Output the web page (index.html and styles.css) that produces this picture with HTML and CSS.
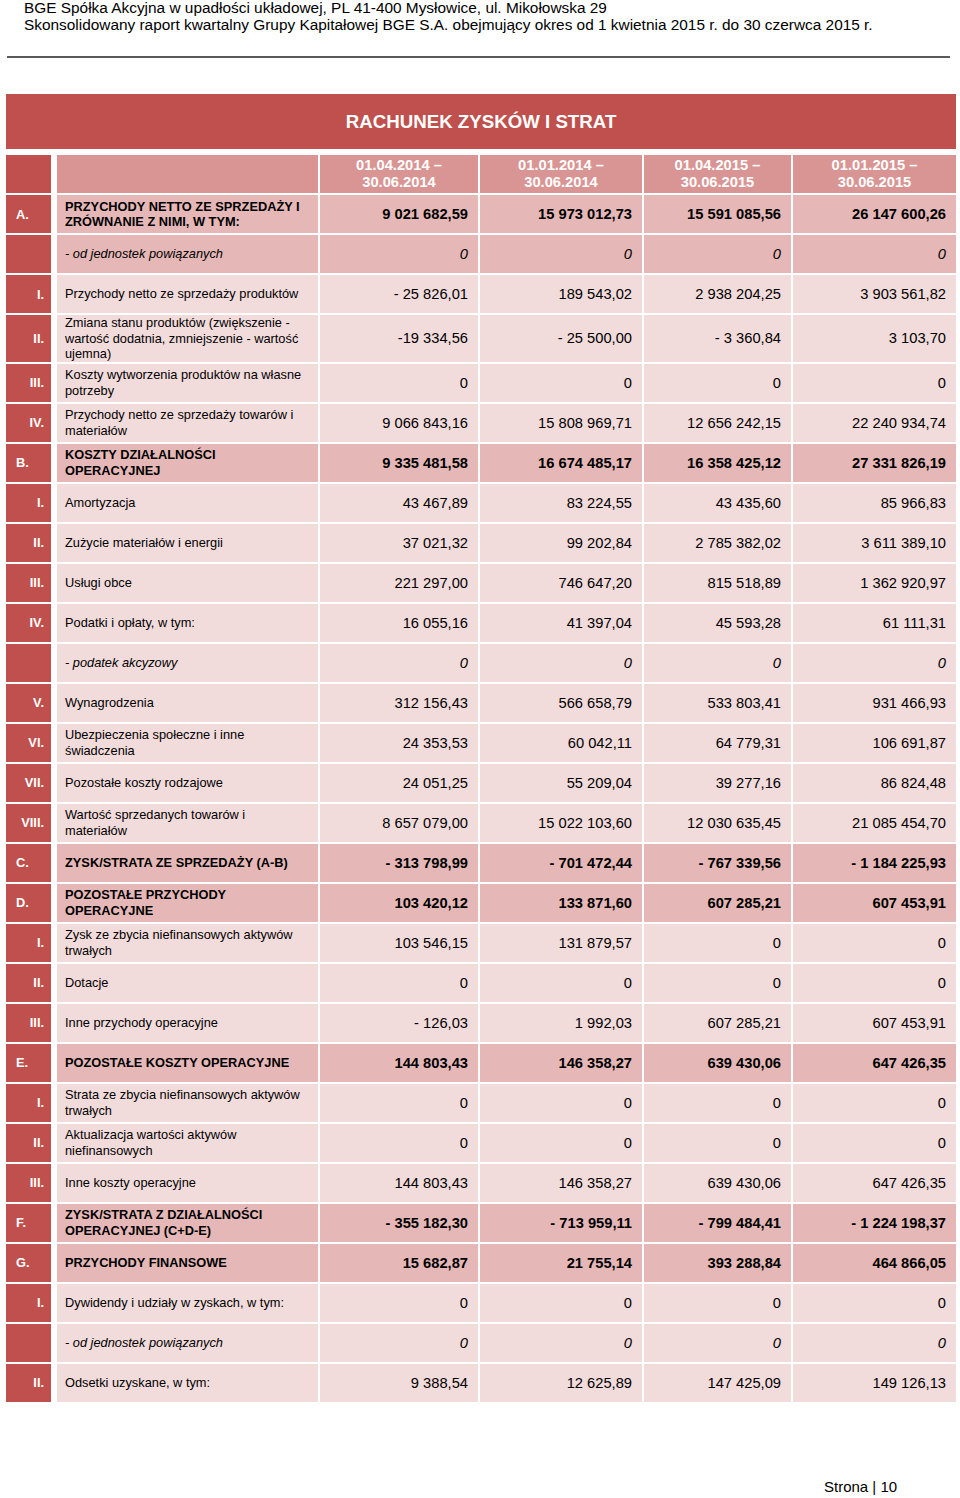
FILE: index.html
```html
<!DOCTYPE html>
<html lang="pl">
<head>
<meta charset="utf-8">
<title>Rachunek zysków i strat</title>
<link rel="stylesheet" href="styles.css">
</head>
<body>
<header class="doc-head">
  <p>BGE Spółka Akcyjna w upadłości układowej, PL 41-400 Mysłowice, ul. Mikołowska 29</p>
  <p>Skonsolidowany raport kwartalny Grupy Kapitałowej BGE S.A. obejmujący okres od 1 kwietnia 2015 r. do 30 czerwca 2015 r.</p>
</header>
<hr class="rule">
<section class="report">
  <h1 class="title">RACHUNEK ZYSKÓW I STRAT</h1>
  <table class="pl">
    <colgroup>
      <col class="c0"><col class="c1"><col class="c2"><col class="c3"><col class="c4"><col class="c5">
    </colgroup>
    <thead>
      <tr class="head">
        <th class="idx"></th>
        <th class="hlabel"></th>
        <th>01.04.2014 –<br>30.06.2014</th>
        <th>01.01.2014 –<br>30.06.2014</th>
        <th>01.04.2015 –<br>30.06.2015</th>
        <th>01.01.2015 –<br>30.06.2015</th>
      </tr>
    </thead>
    <tbody>
      <tr class="mid strong">
        <td class="idx letter">A.</td>
        <td class="label">PRZYCHODY NETTO ZE SPRZEDAŻY I<br>ZRÓWNANIE Z NIMI, W TYM:</td>
        <td class="num">9 021 682,59</td><td class="num">15 973 012,73</td><td class="num">15 591 085,56</td><td class="num">26 147 600,26</td>
      </tr>
      <tr class="mid sub">
        <td class="idx"></td>
        <td class="label">- od jednostek powiązanych</td>
        <td class="num">0</td><td class="num">0</td><td class="num">0</td><td class="num">0</td>
      </tr>
      <tr class="light">
        <td class="idx roman">I.</td>
        <td class="label">Przychody netto ze sprzedaży produktów</td>
        <td class="num">- 25 826,01</td><td class="num">189 543,02</td><td class="num">2 938 204,25</td><td class="num">3 903 561,82</td>
      </tr>
      <tr class="light">
        <td class="idx roman">II.</td>
        <td class="label">Zmiana stanu produktów (zwiększenie -<br>wartość dodatnia, zmniejszenie - wartość<br>ujemna)</td>
        <td class="num">-19 334,56</td><td class="num">- 25 500,00</td><td class="num">- 3 360,84</td><td class="num">3 103,70</td>
      </tr>
      <tr class="light">
        <td class="idx roman">III.</td>
        <td class="label">Koszty wytworzenia produktów na własne<br>potrzeby</td>
        <td class="num">0</td><td class="num">0</td><td class="num">0</td><td class="num">0</td>
      </tr>
      <tr class="light">
        <td class="idx roman">IV.</td>
        <td class="label">Przychody netto ze sprzedaży towarów i<br>materiałów</td>
        <td class="num">9 066 843,16</td><td class="num">15 808 969,71</td><td class="num">12 656 242,15</td><td class="num">22 240 934,74</td>
      </tr>
      <tr class="mid strong">
        <td class="idx letter">B.</td>
        <td class="label">KOSZTY DZIAŁALNOŚCI<br>OPERACYJNEJ</td>
        <td class="num">9 335 481,58</td><td class="num">16 674 485,17</td><td class="num">16 358 425,12</td><td class="num">27 331 826,19</td>
      </tr>
      <tr class="light">
        <td class="idx roman">I.</td>
        <td class="label">Amortyzacja</td>
        <td class="num">43 467,89</td><td class="num">83 224,55</td><td class="num">43 435,60</td><td class="num">85 966,83</td>
      </tr>
      <tr class="light">
        <td class="idx roman">II.</td>
        <td class="label">Zużycie materiałów i energii</td>
        <td class="num">37 021,32</td><td class="num">99 202,84</td><td class="num">2 785 382,02</td><td class="num">3 611 389,10</td>
      </tr>
      <tr class="light">
        <td class="idx roman">III.</td>
        <td class="label">Usługi obce</td>
        <td class="num">221 297,00</td><td class="num">746 647,20</td><td class="num">815 518,89</td><td class="num">1 362 920,97</td>
      </tr>
      <tr class="light">
        <td class="idx roman">IV.</td>
        <td class="label">Podatki i opłaty, w tym:</td>
        <td class="num">16 055,16</td><td class="num">41 397,04</td><td class="num">45 593,28</td><td class="num">61 111,31</td>
      </tr>
      <tr class="light sub">
        <td class="idx"></td>
        <td class="label">- podatek akcyzowy</td>
        <td class="num">0</td><td class="num">0</td><td class="num">0</td><td class="num">0</td>
      </tr>
      <tr class="light">
        <td class="idx roman">V.</td>
        <td class="label">Wynagrodzenia</td>
        <td class="num">312 156,43</td><td class="num">566 658,79</td><td class="num">533 803,41</td><td class="num">931 466,93</td>
      </tr>
      <tr class="light">
        <td class="idx roman">VI.</td>
        <td class="label">Ubezpieczenia społeczne i inne<br>świadczenia</td>
        <td class="num">24 353,53</td><td class="num">60 042,11</td><td class="num">64 779,31</td><td class="num">106 691,87</td>
      </tr>
      <tr class="light">
        <td class="idx roman">VII.</td>
        <td class="label">Pozostałe koszty rodzajowe</td>
        <td class="num">24 051,25</td><td class="num">55 209,04</td><td class="num">39 277,16</td><td class="num">86 824,48</td>
      </tr>
      <tr class="light">
        <td class="idx roman">VIII.</td>
        <td class="label">Wartość sprzedanych towarów i<br>materiałów</td>
        <td class="num">8 657 079,00</td><td class="num">15 022 103,60</td><td class="num">12 030 635,45</td><td class="num">21 085 454,70</td>
      </tr>
      <tr class="mid strong">
        <td class="idx letter">C.</td>
        <td class="label">ZYSK/STRATA ZE SPRZEDAŻY (A-B)</td>
        <td class="num">- 313 798,99</td><td class="num">- 701 472,44</td><td class="num">- 767 339,56</td><td class="num">- 1 184 225,93</td>
      </tr>
      <tr class="mid strong">
        <td class="idx letter">D.</td>
        <td class="label">POZOSTAŁE PRZYCHODY<br>OPERACYJNE</td>
        <td class="num">103 420,12</td><td class="num">133 871,60</td><td class="num">607 285,21</td><td class="num">607 453,91</td>
      </tr>
      <tr class="light">
        <td class="idx roman">I.</td>
        <td class="label">Zysk ze zbycia niefinansowych aktywów<br>trwałych</td>
        <td class="num">103 546,15</td><td class="num">131 879,57</td><td class="num">0</td><td class="num">0</td>
      </tr>
      <tr class="light">
        <td class="idx roman">II.</td>
        <td class="label">Dotacje</td>
        <td class="num">0</td><td class="num">0</td><td class="num">0</td><td class="num">0</td>
      </tr>
      <tr class="light">
        <td class="idx roman">III.</td>
        <td class="label">Inne przychody operacyjne</td>
        <td class="num">- 126,03</td><td class="num">1 992,03</td><td class="num">607 285,21</td><td class="num">607 453,91</td>
      </tr>
      <tr class="mid strong">
        <td class="idx letter">E.</td>
        <td class="label">POZOSTAŁE KOSZTY OPERACYJNE</td>
        <td class="num">144 803,43</td><td class="num">146 358,27</td><td class="num">639 430,06</td><td class="num">647 426,35</td>
      </tr>
      <tr class="light">
        <td class="idx roman">I.</td>
        <td class="label">Strata ze zbycia niefinansowych aktywów<br>trwałych</td>
        <td class="num">0</td><td class="num">0</td><td class="num">0</td><td class="num">0</td>
      </tr>
      <tr class="light">
        <td class="idx roman">II.</td>
        <td class="label">Aktualizacja wartości aktywów<br>niefinansowych</td>
        <td class="num">0</td><td class="num">0</td><td class="num">0</td><td class="num">0</td>
      </tr>
      <tr class="light">
        <td class="idx roman">III.</td>
        <td class="label">Inne koszty operacyjne</td>
        <td class="num">144 803,43</td><td class="num">146 358,27</td><td class="num">639 430,06</td><td class="num">647 426,35</td>
      </tr>
      <tr class="mid strong">
        <td class="idx letter">F.</td>
        <td class="label">ZYSK/STRATA Z DZIAŁALNOŚCI<br>OPERACYJNEJ (C+D-E)</td>
        <td class="num">- 355 182,30</td><td class="num">- 713 959,11</td><td class="num">- 799 484,41</td><td class="num">- 1 224 198,37</td>
      </tr>
      <tr class="mid strong">
        <td class="idx letter">G.</td>
        <td class="label">PRZYCHODY FINANSOWE</td>
        <td class="num">15 682,87</td><td class="num">21 755,14</td><td class="num">393 288,84</td><td class="num">464 866,05</td>
      </tr>
      <tr class="light">
        <td class="idx roman">I.</td>
        <td class="label">Dywidendy i udziały w zyskach, w tym:</td>
        <td class="num">0</td><td class="num">0</td><td class="num">0</td><td class="num">0</td>
      </tr>
      <tr class="light sub">
        <td class="idx"></td>
        <td class="label">- od jednostek powiązanych</td>
        <td class="num">0</td><td class="num">0</td><td class="num">0</td><td class="num">0</td>
      </tr>
      <tr class="light">
        <td class="idx roman">II.</td>
        <td class="label">Odsetki uzyskane, w tym:</td>
        <td class="num">9 388,54</td><td class="num">12 625,89</td><td class="num">147 425,09</td><td class="num">149 126,13</td>
      </tr>
    </tbody>
  </table>
</section>
<footer class="page-no">Strona | 10</footer>
</body>
</html>
```

FILE: styles.css
```css
html, body {
  margin: 0;
  padding: 0;
  background: #ffffff;
}

body {
  width: 960px;
  height: 1498px;
  font-family: "Liberation Sans", Arial, sans-serif;
  color: #000000;
  overflow: hidden;
}

.doc-head {
  padding-left: 24px;
  margin-top: -1px;
  font-size: 15.4px;
  line-height: 17px;
}

.doc-head p {
  margin: 0;
}

.rule {
  display: block;
  margin: 23px 0 0 7px;
  width: 943px;
  height: 2px;
  border: 0;
  background: #5a5a5a;
}

.report {
  margin-top: 36px;
}

.title {
  margin: 0 0 0 6px;
  width: 950px;
  height: 55px;
  display: flex;
  align-items: center;
  justify-content: center;
  background: #c0504d;
  color: #ffffff;
  font-size: 18.7px;
  font-weight: bold;
}

.pl {
  margin: 4px 0 0 4px;
  width: 954px;
  table-layout: fixed;
  border-collapse: separate;
  border-spacing: 2px;
}

.c0 { width: 49px; }
.c1 { width: 261px; }
.c2 { width: 158px; }
.c3 { width: 162px; }
.c4 { width: 147px; }
.c5 { width: 163px; }

.pl th,
.pl td {
  padding: 0;
  height: 38px;
  vertical-align: middle;
}

.pl .idx {
  background: #c0504d;
  background-clip: padding-box;
  border-right: 4px solid transparent;
  color: #ffffff;
  font-weight: bold;
  font-size: 12.8px;
}

.pl .letter {
  text-align: left;
  padding-left: 10px;
}

.pl .roman {
  text-align: right;
  padding-right: 7px;
}

.head th {
  background: #d99594;
  color: #ffffff;
  font-weight: bold;
  font-size: 14.7px;
  line-height: 17px;
  text-align: center;
}

.pl .label {
  padding-left: 8px;
  font-size: 12.8px;
  line-height: 15.5px;
}

.pl .num {
  text-align: right;
  padding-right: 10px;
  font-size: 14.7px;
}

.light td:not(.idx) {
  background: #f2dbdb;
}

.mid td:not(.idx) {
  background: #e5b8b7;
}

.strong td {
  font-weight: bold;
}

.sub td {
  font-style: italic;
}

.page-no {
  margin: 74px 0 0 824px;
  font-size: 15px;
  line-height: 18px;
}
```
